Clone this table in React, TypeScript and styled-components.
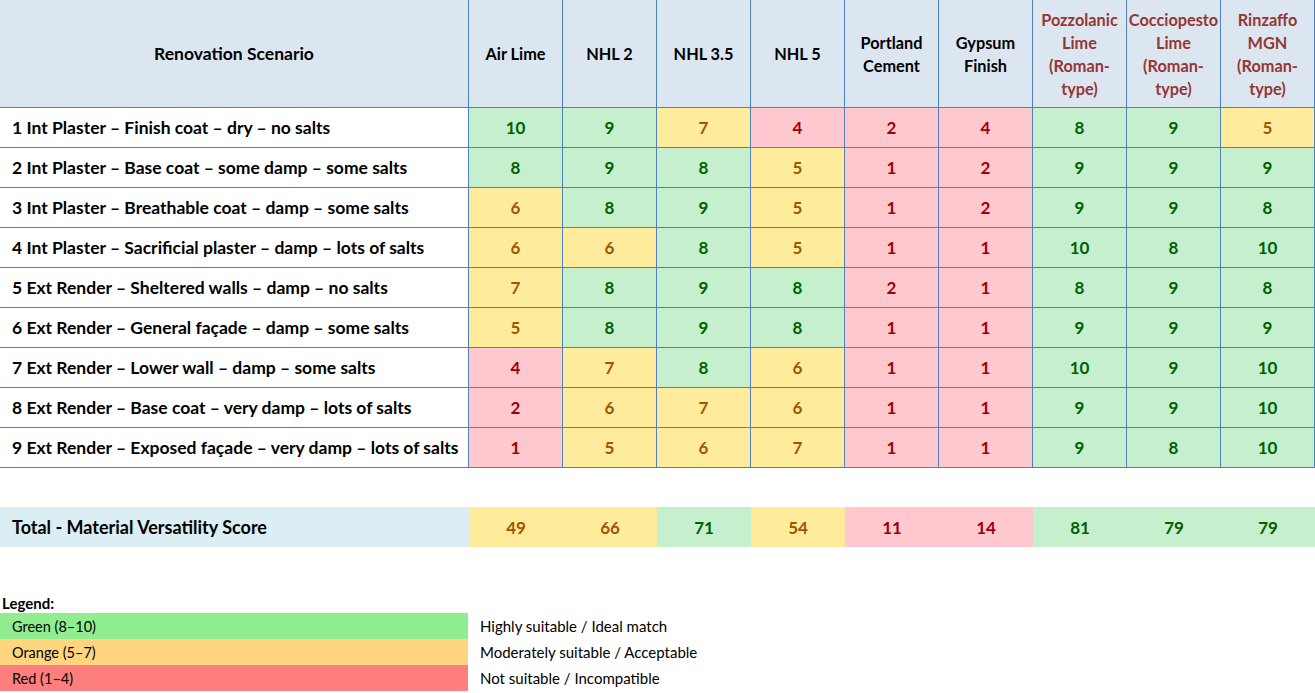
import React from "react";
import styled, { createGlobalStyle } from "styled-components";

const Global = createGlobalStyle`
  html, body { margin: 0; padding: 0; background: #ffffff; }
  body { font-family: "Lato", "Liberation Sans", sans-serif; }
`;

type Tone = "g" | "y" | "r";

const toneBg: Record<Tone, string> = { g: "#C6EFCE", y: "#FFEB9C", r: "#FFC7CE" };
const toneFg: Record<Tone, string> = { g: "#006100", y: "#9C5700", r: "#9C0006" };
const toneOf = (v: number): Tone => (v >= 8 ? "g" : v >= 5 ? "y" : "r");

const COLS = "469px repeat(9, 94px)";
const LINE = "#4F81BD";

const Page = styled.div`
  width: 1315px;
  display: flex;
  flex-direction: column;
`;

const Table = styled.div`
  display: grid;
  grid-template-columns: ${COLS};
`;

const HeadCell = styled.div<{ $roman?: boolean; $wide?: boolean }>`
  box-sizing: border-box;
  height: 108px;
  background: #DCE6F1;
  border-right: 1px solid ${LINE};
  border-bottom: 1px solid ${LINE};
  display: flex;
  align-items: center;
  justify-content: center;
  text-align: center;
  font-weight: 700;
  font-size: ${(p) => (p.$wide ? "17.5px" : "16.3px")};
  line-height: 23px;
  color: ${(p) => (p.$roman ? "#963634" : "#000000")};
  white-space: pre-line;
`;

const LabelCell = styled.div`
  box-sizing: border-box;
  height: 40px;
  background: #ffffff;
  border-right: 1px solid ${LINE};
  border-bottom: 1px solid ${LINE};
  display: flex;
  align-items: center;
  padding-left: 12px;
  font-weight: 700;
  font-size: 17.5px;
  color: #000000;
  white-space: nowrap;
`;

const ScoreCell = styled.div<{ $tone: Tone; $bordered?: boolean }>`
  box-sizing: border-box;
  height: 40px;
  background: ${(p) => toneBg[p.$tone]};
  color: ${(p) => toneFg[p.$tone]};
  border-right: ${(p) => (p.$bordered ? `1px solid ${LINE}` : "none")};
  border-bottom: ${(p) => (p.$bordered ? `1px solid ${LINE}` : "none")};
  display: flex;
  align-items: center;
  justify-content: center;
  font-weight: 700;
  font-size: 17px;
`;

const TotalRow = styled.div`
  display: grid;
  grid-template-columns: ${COLS};
  margin-top: 39px;
`;

const TotalLabel = styled.div`
  height: 40px;
  background: #DAEEF3;
  display: flex;
  align-items: center;
  padding-left: 12px;
  font-weight: 700;
  font-size: 18px;
  color: #000000;
`;

const Legend = styled.div`
  margin-top: 46px;
  display: flex;
  flex-direction: column;
`;

const LegendTitle = styled.div`
  height: 20px;
  display: flex;
  align-items: center;
  padding-left: 2px;
  font-weight: 700;
  font-size: 15px;
  color: #000000;
`;

const LegendRow = styled.div`
  display: grid;
  grid-template-columns: 468px 1fr;
  height: 26px;
`;

const Swatch = styled.div<{ $bg: string }>`
  background: ${(p) => p.$bg};
  display: flex;
  align-items: center;
  padding-left: 12px;
  font-size: 14.5px;
  color: #000000;
`;

const LegendText = styled.div`
  display: flex;
  align-items: center;
  padding-left: 12px;
  font-size: 15px;
  color: #000000;
`;

const headers: { t: string; roman?: boolean }[] = [
  { t: "Air Lime" },
  { t: "NHL 2" },
  { t: "NHL 3.5" },
  { t: "NHL 5" },
  { t: "Portland\nCement" },
  { t: "Gypsum\nFinish" },
  { t: "Pozzolanic\nLime\n(Roman-\ntype)", roman: true },
  { t: "Cocciopesto\nLime\n(Roman-\ntype)", roman: true },
  { t: "Rinzaffo\nMGN\n(Roman-\ntype)", roman: true },
];

const rows: { label: string; v: number[] }[] = [
  { label: "1 Int Plaster – Finish coat – dry – no salts", v: [10, 9, 7, 4, 2, 4, 8, 9, 5] },
  { label: "2 Int Plaster – Base coat – some damp – some salts", v: [8, 9, 8, 5, 1, 2, 9, 9, 9] },
  { label: "3 Int Plaster – Breathable coat – damp – some salts", v: [6, 8, 9, 5, 1, 2, 9, 9, 8] },
  { label: "4 Int Plaster – Sacrificial plaster – damp – lots of salts", v: [6, 6, 8, 5, 1, 1, 10, 8, 10] },
  { label: "5 Ext Render – Sheltered walls – damp – no salts", v: [7, 8, 9, 8, 2, 1, 8, 9, 8] },
  { label: "6 Ext Render – General façade – damp – some salts", v: [5, 8, 9, 8, 1, 1, 9, 9, 9] },
  { label: "7 Ext Render – Lower wall – damp – some salts", v: [4, 7, 8, 6, 1, 1, 10, 9, 10] },
  { label: "8 Ext Render – Base coat – very damp – lots of salts", v: [2, 6, 7, 6, 1, 1, 9, 9, 10] },
  { label: "9 Ext Render – Exposed façade – very damp – lots of salts", v: [1, 5, 6, 7, 1, 1, 9, 8, 10] },
];

const totals: { v: number; tone: Tone }[] = [
  { v: 49, tone: "y" },
  { v: 66, tone: "y" },
  { v: 71, tone: "g" },
  { v: 54, tone: "y" },
  { v: 11, tone: "r" },
  { v: 14, tone: "r" },
  { v: 81, tone: "g" },
  { v: 79, tone: "g" },
  { v: 79, tone: "g" },
];

const legend = [
  { bg: "#90EE90", k: "Green (8–10)", d: "Highly suitable / Ideal match" },
  { bg: "#FFD580", k: "Orange (5–7)", d: "Moderately suitable / Acceptable" },
  { bg: "#FF7F7F", k: "Red (1–4)", d: "Not suitable / Incompatible" },
];

export default function App() {
  return (
    <>
      <Global />
      <Page>
        <Table>
          <HeadCell $wide>Renovation Scenario</HeadCell>
          {headers.map((h, i) => (
            <HeadCell key={i} $roman={h.roman}>
              {h.t}
            </HeadCell>
          ))}
          {rows.map((r, ri) => (
            <React.Fragment key={ri}>
              <LabelCell>{r.label}</LabelCell>
              {r.v.map((n, ci) => (
                <ScoreCell key={ci} $tone={toneOf(n)} $bordered>
                  {n}
                </ScoreCell>
              ))}
            </React.Fragment>
          ))}
        </Table>
        <TotalRow>
          <TotalLabel>Total - Material Versatility Score</TotalLabel>
          {totals.map((t, i) => (
            <ScoreCell key={i} $tone={t.tone}>
              {t.v}
            </ScoreCell>
          ))}
        </TotalRow>
        <Legend>
          <LegendTitle>Legend:</LegendTitle>
          {legend.map((l) => (
            <LegendRow key={l.k}>
              <Swatch $bg={l.bg}>{l.k}</Swatch>
              <LegendText>{l.d}</LegendText>
            </LegendRow>
          ))}
        </Legend>
      </Page>
    </>
  );
}
